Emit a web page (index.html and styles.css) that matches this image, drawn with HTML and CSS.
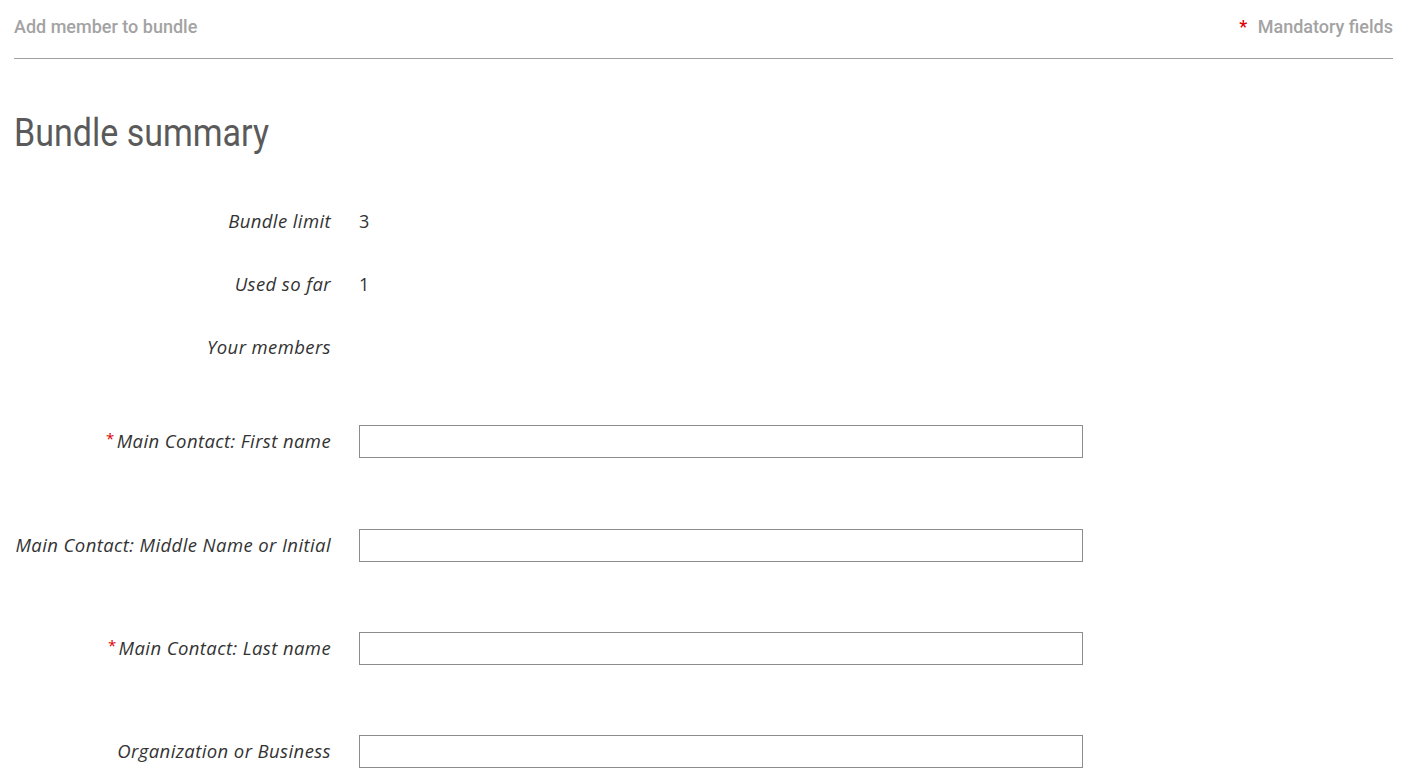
FILE: index.html
```html
<!DOCTYPE html>
<html>
<head>
<meta charset="utf-8">
<link rel="stylesheet" href="styles.css">
</head>
<body>
<div class="page">
  <header class="topbar">
    <div class="crumb">Add member to bundle</div>
    <div class="mandatory"><span class="req">*</span> Mandatory fields</div>
  </header>
  <h1 class="title">Bundle summary</h1>
  <div class="summary">
    <div class="info-row"><div class="label">Bundle limit</div><div class="value">3</div></div>
    <div class="info-row"><div class="label">Used so far</div><div class="value">1</div></div>
    <div class="info-row"><div class="label">Your members</div><div class="value"></div></div>
  </div>
  <form class="form">
    <div class="field-row"><label class="label"><span class="star">*</span>Main Contact: First name</label><input class="input" type="text"></div>
    <div class="field-row"><label class="label">Main Contact: Middle Name or Initial</label><input class="input" type="text"></div>
    <div class="field-row"><label class="label"><span class="star">*</span>Main Contact: Last name</label><input class="input" type="text"></div>
    <div class="field-row"><label class="label">Organization or Business</label><input class="input" type="text"></div>
  </form>
</div>
</body>
</html>
```
FILE: styles.css
```css
html, body { margin: 0; padding: 0; background: #fff; }
body { overflow: hidden; }
.page { padding: 0 16px 0 14px; }
.topbar {
  display: flex;
  justify-content: space-between;
  align-items: center;
  height: 52px;
  border-bottom: 1px solid #a0a0a0;
  font-family: Roboto, "Liberation Sans", sans-serif;
  font-weight: 500;
  font-size: 18px;
  color: #a3a3a3;
  padding-bottom: 6px;
}
.req { color: #e00000; margin-right: 6px; }
.title {
  font-family: Roboto, "Liberation Sans", sans-serif;
  font-weight: 400;
  font-size: 38px;
  color: #5a5a5a;
  margin: 50px 0 0 0;
  line-height: 48px;
  transform: scaleX(0.895);
  transform-origin: left center;
}
.summary { margin-top: 32px; }
.info-row {
  display: grid;
  grid-template-columns: 317px 1fr;
  column-gap: 28px;
  height: 63px;
  align-items: center;
}
.label {
  font-family: "Open Sans", Lato, sans-serif;
  font-style: italic;
  font-size: 18.5px;
  letter-spacing: 0.4px;
  color: #333;
  text-align: right;
}
.field-row .label { padding-bottom: 2px; }
.value {
  font-family: "Open Sans", Lato, sans-serif;
  font-size: 18px;
  color: #333;
}
.star { color: #e00000; font-style: normal; font-size: 15px; vertical-align: 4px; margin-right: 2px; }
.form { margin-top: 12px; }
.field-row {
  display: grid;
  grid-template-columns: 317px 724px;
  column-gap: 28px;
  align-items: center;
  height: 103.4px;
}
.input {
  box-sizing: border-box;
  height: 33px;
  width: 724px;
  border: 1px solid #8c8c8c;
  margin: 0;
  padding: 0 6px;
  background: #fff;
}
```
